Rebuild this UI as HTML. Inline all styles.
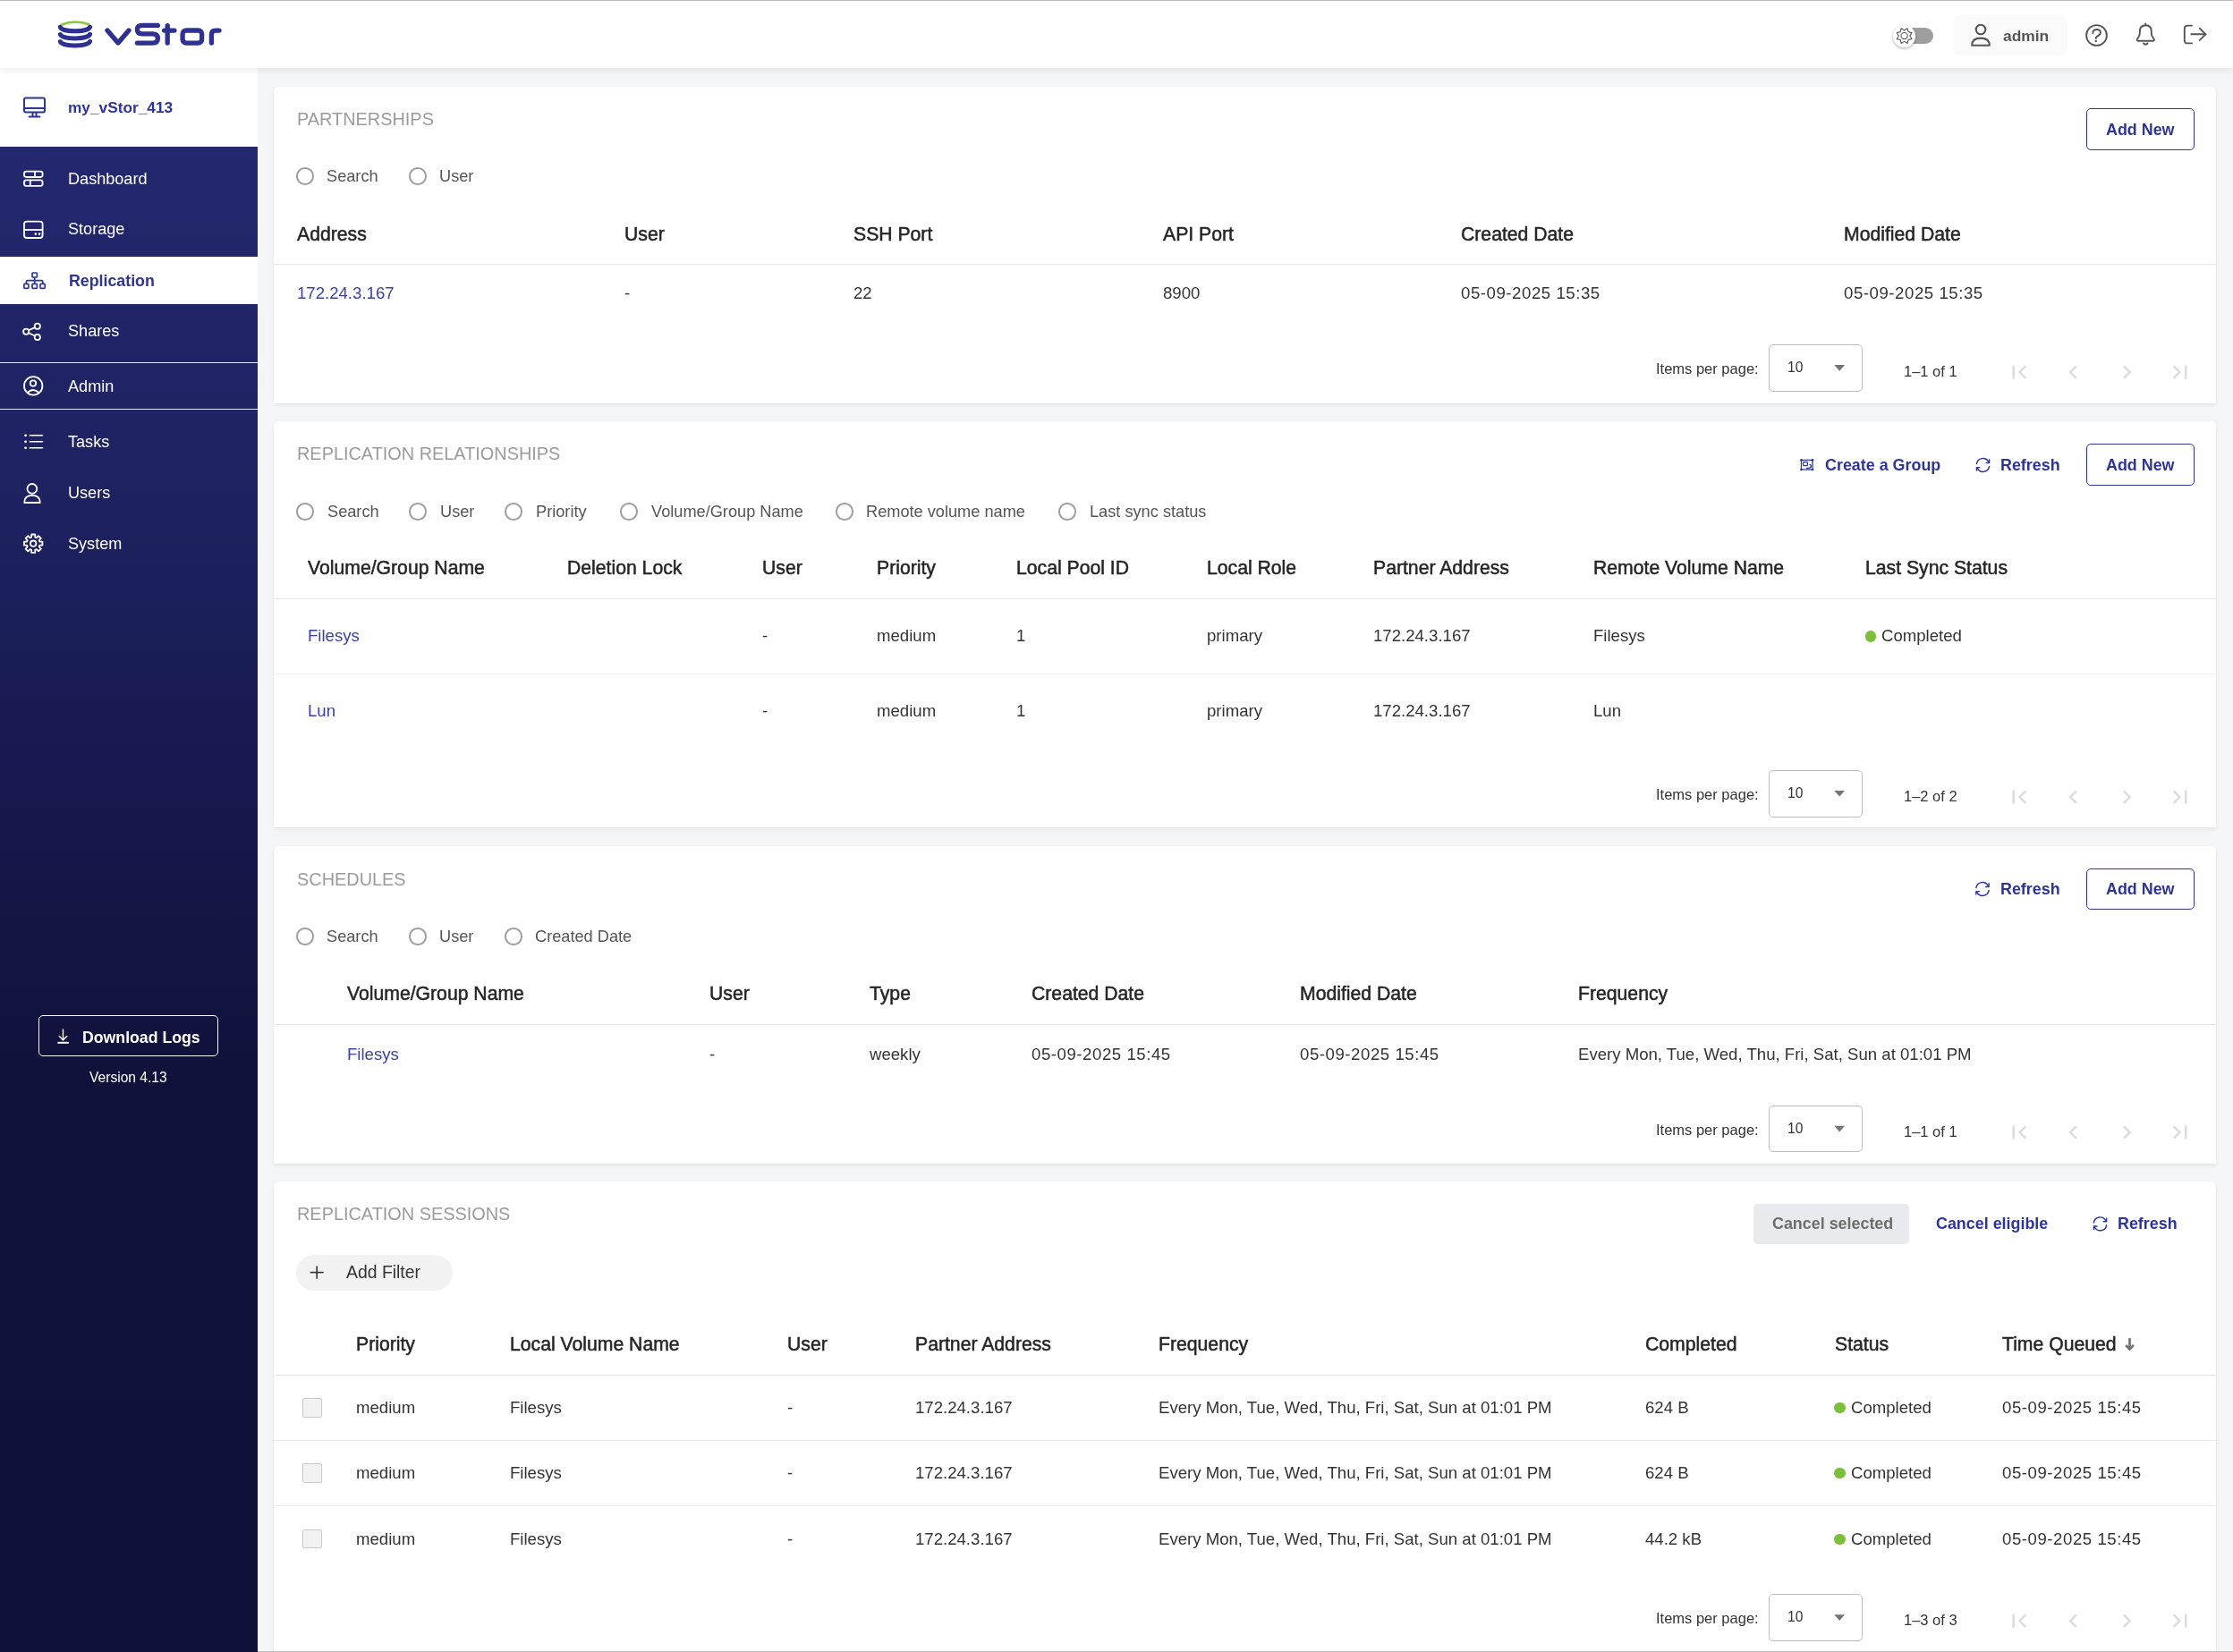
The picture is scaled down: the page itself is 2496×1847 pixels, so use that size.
<!DOCTYPE html>
<html><head><meta charset="utf-8"><title>vStor - Replication</title>
<style>
html,body{margin:0;padding:0;}
body{width:2496px;height:1847px;overflow:hidden;position:relative;background:#f4f5f7;font-family:"Liberation Sans",sans-serif;}
.t{position:absolute;white-space:nowrap;will-change:transform;font-family:"Liberation Sans",sans-serif;}
svg{overflow:visible}
</style></head><body>
<div style="position:absolute;left:288.0px;top:76.0px;width:2208.0px;height:1771.0px;background:#f4f5f7"></div>
<div style="position:absolute;left:0.0px;top:76.0px;width:288.0px;height:88.0px;background:#ffffff"></div>
<div style="position:absolute;left:0.0px;top:164.0px;width:288.0px;height:1683.0px;background:linear-gradient(180deg,#23286f 0%,#1d215f 25%,#15184b 45%,#10123b 62%,#0f1138 100%)"></div>
<svg style="position:absolute;left:20px;top:100px;" width="40" height="40" viewBox="20 100 40 40" fill="none"><g stroke="#2d3596" stroke-width="2" stroke-linecap="round" stroke-linejoin="round"><rect x="27" y="109.5" width="23" height="16" rx="2"/><line x1="27" y1="121" x2="50" y2="121"/><line x1="36.5" y1="126" x2="36.5" y2="130"/><line x1="40.5" y1="126" x2="40.5" y2="130"/><line x1="32.5" y1="130.5" x2="44.5" y2="130.5"/></g></svg>
<div class="t" style="left:76.0px;top:111.6px;font-size:17.3px;line-height:17.3px;color:#2d3596;font-weight:700;">my_vStor_413</div>
<svg style="position:absolute;left:0px;top:160px;" width="288" height="480" viewBox="0 160 288 480" fill="none"><g stroke="#ffffff" stroke-width="1.8"><rect x="27" y="191.6" width="20.6" height="6.4" rx="2.4"/><line x1="39" y1="191.6" x2="39" y2="198"/><rect x="27" y="201.4" width="20.6" height="6.4" rx="2.4"/><line x1="33.8" y1="201.4" x2="33.8" y2="207.8"/></g><g stroke="#ffffff" stroke-width="1.8"><rect x="27" y="247.6" width="20.6" height="18.4" rx="3"/><line x1="27" y1="257" x2="47.6" y2="257"/></g><circle cx="39.8" cy="261.6" r="1.3" fill="#ffffff"/><circle cx="44.1" cy="261.6" r="1.3" fill="#ffffff"/></svg>
<div class="t" style="left:75.7px;top:190.5px;font-size:18.1px;line-height:18.1px;color:#ffffff;font-weight:400;">Dashboard</div>
<div class="t" style="left:75.7px;top:247.3px;font-size:18.1px;line-height:18.1px;color:#ffffff;font-weight:400;">Storage</div>
<div style="position:absolute;left:0.0px;top:287.0px;width:288.0px;height:53.0px;background:#ffffff"></div>
<svg style="position:absolute;left:0px;top:160px;" width="288" height="480" viewBox="0 160 288 480" fill="none"><g stroke="#2d3596" stroke-width="1.7" stroke-linejoin="round"><rect x="36" y="305" width="5.4" height="5" rx="0.8"/><line x1="38.7" y1="310" x2="38.7" y2="317"/><path d="M29.4 317 V315 Q29.4 313.6 30.8 313.6 H46.4 Q47.8 313.6 47.8 315 V317"/><rect x="26.9" y="317.3" width="5" height="5" rx="0.8"/><rect x="36" y="317.3" width="5.4" height="5" rx="0.8"/><rect x="45" y="317.3" width="5.2" height="5" rx="0.8"/></g></svg>
<div class="t" style="left:76.5px;top:305.5px;font-size:17.8px;line-height:17.8px;color:#2d3596;font-weight:700;">Replication</div>
<svg style="position:absolute;left:0px;top:160px;" width="288" height="480" viewBox="0 160 288 480" fill="none"><g stroke="#ffffff" stroke-width="1.8"><circle cx="41.8" cy="364.7" r="3.1"/><circle cx="29.2" cy="370.8" r="3.1"/><circle cx="41.8" cy="377" r="3.1"/><line x1="32" y1="369.3" x2="39" y2="366.1"/><line x1="32" y1="372.3" x2="39" y2="375.5"/></g></svg>
<div class="t" style="left:75.7px;top:360.9px;font-size:18.1px;line-height:18.1px;color:#ffffff;font-weight:400;">Shares</div>
<div style="position:absolute;left:0.0px;top:404.8px;width:288.0px;height:1.2px;background:#e9eaf2"></div>
<svg style="position:absolute;left:0px;top:160px;" width="288" height="480" viewBox="0 160 288 480" fill="none"><g stroke="#ffffff" stroke-width="1.8"><circle cx="37.2" cy="431.4" r="10.2"/><circle cx="37" cy="428.6" r="3.2"/><path d="M30.4 439.4 Q37 432.6 43.8 439.4"/></g></svg>
<div class="t" style="left:75.7px;top:422.9px;font-size:18.1px;line-height:18.1px;color:#ffffff;font-weight:400;">Admin</div>
<div style="position:absolute;left:0.0px;top:456.8px;width:288.0px;height:1.2px;background:#e9eaf2"></div>
<svg style="position:absolute;left:0px;top:160px;" width="288" height="480" viewBox="0 160 288 480" fill="none"><g fill="#ffffff"><circle cx="28.6" cy="486.8" r="1.4"/><circle cx="28.6" cy="493.8" r="1.4"/><circle cx="28.6" cy="500.8" r="1.4"/></g><g stroke="#ffffff" stroke-width="1.6" stroke-linecap="round"><line x1="33.4" y1="486.8" x2="47.4" y2="486.8"/><line x1="33.4" y1="493.8" x2="47.4" y2="493.8"/><line x1="33.4" y1="500.8" x2="47.4" y2="500.8"/></g></svg>
<div class="t" style="left:75.7px;top:484.9px;font-size:18.1px;line-height:18.1px;color:#ffffff;font-weight:400;">Tasks</div>
<svg style="position:absolute;left:0px;top:160px;" width="288" height="480" viewBox="0 160 288 480" fill="none"><g stroke="#ffffff" stroke-width="1.8"><circle cx="35.9" cy="546.4" r="5.4"/><path d="M27.2 562 Q27.2 553.8 36 553.8 Q44.8 553.8 44.8 562 Z" stroke-linejoin="round"/></g></svg>
<div class="t" style="left:75.7px;top:541.5px;font-size:18.1px;line-height:18.1px;color:#ffffff;font-weight:400;">Users</div>
<svg style="position:absolute;left:0px;top:160px;" width="288" height="480" viewBox="0 160 288 480" fill="none"><g stroke="#ffffff" stroke-width="1.8" stroke-linejoin="round"><path d="M35.22 597.49 L39.18 597.49 L39.18 600.57 L40.84 601.26 L43.02 599.08 L45.82 601.88 L43.64 604.06 L44.33 605.72 L47.41 605.72 L47.41 609.68 L44.33 609.68 L43.64 611.34 L45.82 613.52 L43.02 616.32 L40.84 614.14 L39.18 614.83 L39.18 617.91 L35.22 617.91 L35.22 614.83 L33.56 614.14 L31.38 616.32 L28.58 613.52 L30.76 611.34 L30.07 609.68 L26.99 609.68 L26.99 605.72 L30.07 605.72 L30.76 604.06 L28.58 601.88 L31.38 599.08 L33.56 601.26 L35.22 600.57 Z"/><circle cx="37.2" cy="607.7" r="3.2"/></g></svg>
<div class="t" style="left:75.7px;top:599.1px;font-size:18.1px;line-height:18.1px;color:#ffffff;font-weight:400;">System</div>
<div style="position:absolute;left:43.4px;top:1135.3px;width:201.1px;height:46.1px;border:1.6px solid #ffffff;border-radius:5px;box-sizing:border-box"></div>
<svg style="position:absolute;left:55px;top:1145px;" width="30" height="30" viewBox="55 1145 30 30" fill="none"><g stroke="#ffffff" stroke-width="1.7" stroke-linecap="round" stroke-linejoin="round"><line x1="70.5" y1="1151" x2="70.5" y2="1162.8" stroke-width="1.4"/><path d="M66.3 1158.6 L70.5 1162.8 L74.7 1158.6" stroke-width="1.4"/><line x1="64.4" y1="1165.8" x2="76.8" y2="1165.8" stroke-width="2" stroke-linecap="butt"/></g></svg>
<div class="t" style="left:92.2px;top:1151.5px;font-size:17.7px;line-height:17.7px;color:#ffffff;font-weight:700;">Download Logs</div>
<div class="t" style="left:100.3px;top:1197.2px;font-size:15.6px;line-height:15.6px;color:#ffffff;font-weight:400;">Version 4.13</div>
<div style="position:absolute;left:0.0px;top:0.0px;width:2496.0px;height:76.0px;background:#ffffff;box-shadow:0 3px 8px rgba(0,0,0,0.07);z-index:5"></div>
<div style="position:absolute;left:0.0px;top:0.0px;width:2496.0px;height:1.2px;background:#bdbdbd;z-index:6"></div>
<svg style="position:absolute;left:60px;top:18px;z-index:8" width="200" height="42" viewBox="60 18 200 42" fill="none"><path d="M68.8 27.7 Q83.9 21.6 99.2 27.3" stroke="#8cc63f" stroke-width="2.6" stroke-linecap="round"/><g stroke="#2e3192" stroke-width="5" stroke-linecap="round" fill="none"><path d="M67.4 30.4 C70 36.3 98 36.3 100.5 30.2"/><path d="M67.4 38.5 C70 44.4 98 44.4 100.5 38.3"/><path d="M67.4 46.6 C70 52.5 98 52.5 100.5 46.4"/></g><g stroke="#2e3192" stroke-width="5.3" stroke-linecap="round" stroke-linejoin="round" fill="none"><path d="M120 34 L132 48 L144 34"/><path d="M176.3 28.4 H159 Q153.4 28.4 153.4 33 Q153.4 37.9 159 37.9 H170.6 Q176.4 37.9 176.4 43 Q176.4 48.1 170.6 48.1 H153.4"/><path d="M187.2 28.6 V48"/><path d="M183.6 34.1 H194.9"/><rect x="204.1" y="34" width="21.5" height="14.1" rx="4"/><path d="M236.4 48 V38.5 Q236.4 34.1 240.8 34.1 H245"/></g></svg>
<div style="position:absolute;left:2129.0px;top:31.0px;width:32.0px;height:18.0px;background:#9e9e9e;border-radius:9px;z-index:7"></div>
<div style="position:absolute;left:2116.3px;top:28.2px;width:24.6px;height:24.6px;background:#ffffff;border-radius:50%;box-shadow:0 1px 3px rgba(0,0,0,0.35);z-index:8"></div>
<svg style="position:absolute;left:2110px;top:22px;z-index:9" width="40" height="40" viewBox="2110 22 40 40" fill="none"><g stroke="#555" stroke-width="1.1" stroke-linejoin="miter"><path d="M2132.04 31.79 L2133.05 35.65 L2136.91 36.66 L2134.90 40.10 L2136.91 43.54 L2133.05 44.55 L2132.04 48.41 L2128.60 46.40 L2125.16 48.41 L2124.15 44.55 L2120.29 43.54 L2122.30 40.10 L2120.29 36.66 L2124.15 35.65 L2125.16 31.79 L2128.60 33.80 Z"/><circle cx="2128.6" cy="40.1" r="3.6"/></g></svg>
<div style="position:absolute;left:2183.0px;top:17.2px;width:128.0px;height:44.5px;background:#fafafa;border-radius:8px;z-index:7"></div>
<svg style="position:absolute;left:2195px;top:20px;z-index:8" width="40" height="40" viewBox="2195 20 40 40" fill="none"><g stroke="#555" stroke-width="2.1" stroke-linejoin="round"><circle cx="2214" cy="33" r="5.3"/><path d="M2204.2 50.7 Q2204.2 42.6 2214 42.6 Q2223.8 42.6 2223.8 50.7 Z"/></g></svg>
<div class="t" style="left:2239.0px;top:31.5px;font-size:17.4px;line-height:17.4px;color:#555555;font-weight:700;z-index:8">admin</div>
<svg style="position:absolute;left:2325px;top:20px;z-index:8" width="40" height="40" viewBox="2325 20 40 40" fill="none"><g stroke="#555" stroke-width="1.9" stroke-linecap="round" fill="none"><circle cx="2343.5" cy="39.5" r="11.4"/><path d="M2339.3 37 Q2339.3 33 2343.6 33 Q2347.9 33 2347.9 36.4 Q2347.9 38.6 2344.6 40.3 Q2342.8 41.3 2342.8 43"/></g><circle cx="2342.8" cy="45.9" r="1.2" fill="#555"/></svg>
<svg style="position:absolute;left:2380px;top:20px;z-index:8" width="40" height="40" viewBox="2380 20 40 40" fill="none"><g stroke="#555" stroke-width="1.9" stroke-linecap="round" stroke-linejoin="round" fill="none"><path d="M2398.3 26.5 V28.3"/><path d="M2398.3 28.3 Q2391.8 28.3 2391.8 35.5 V37.5 Q2391.8 40 2389.5 42.8 Q2387.9 44.7 2389.6 45.7 H2407 Q2408.7 44.7 2407.1 42.8 Q2404.8 40 2404.8 37.5 V35.5 Q2404.8 28.3 2398.3 28.3 Z"/><path d="M2396 48.5 Q2398.3 50.8 2400.6 48.5"/></g></svg>
<svg style="position:absolute;left:2435px;top:20px;z-index:8" width="40" height="40" viewBox="2435 20 40 40" fill="none"><g stroke="#555" stroke-width="1.9" stroke-linecap="round" stroke-linejoin="round" fill="none"><path d="M2450 28.6 H2445.3 Q2441.8 28.6 2441.8 32.1 V44.9 Q2441.8 48.4 2445.3 48.4 H2450"/><path d="M2449.3 38.3 H2465.4"/><path d="M2458.8 31.7 L2465.4 38.3 L2458.8 44.9"/></g></svg>
<div style="position:absolute;left:306.0px;top:96.5px;width:2171.0px;height:354.5px;background:#ffffff;border-radius:5px 5px 0 0;box-shadow:0 2px 4px rgba(0,0,0,0.07),0 0 1px rgba(0,0,0,0.06)"></div>
<div class="t" style="left:332.0px;top:123.8px;font-size:19.9px;line-height:19.9px;color:#9b9b9b;font-weight:400;">PARTNERSHIPS</div>
<div style="position:absolute;left:2332.3px;top:121.3px;width:120.4px;height:46.4px;border:1.6px solid #2d3596;border-radius:5px;box-sizing:border-box"></div>
<div class="t" style="left:2353.5px;top:136.8px;font-size:17.9px;line-height:17.9px;color:#2d3596;font-weight:700;">Add New</div>
<div style="position:absolute;left:331.4px;top:187.2px;width:19.6px;height:19.6px;border:2px solid #9e9e9e;border-radius:50%;box-sizing:border-box"></div>
<div class="t" style="left:365.0px;top:188.0px;font-size:18.2px;line-height:18.2px;color:#555555;font-weight:400;">Search</div>
<div style="position:absolute;left:457.2px;top:187.2px;width:19.6px;height:19.6px;border:2px solid #9e9e9e;border-radius:50%;box-sizing:border-box"></div>
<div class="t" style="left:491.0px;top:188.0px;font-size:18.2px;line-height:18.2px;color:#555555;font-weight:400;">User</div>
<div class="t" style="left:332.0px;top:250.5px;font-size:21.2px;line-height:21.2px;color:#252525;font-weight:400;-webkit-text-stroke:0.5px #252525">Address</div>
<div class="t" style="left:698.0px;top:250.5px;font-size:21.2px;line-height:21.2px;color:#252525;font-weight:400;-webkit-text-stroke:0.5px #252525">User</div>
<div class="t" style="left:953.6px;top:250.5px;font-size:21.2px;line-height:21.2px;color:#252525;font-weight:400;-webkit-text-stroke:0.5px #252525">SSH Port</div>
<div class="t" style="left:1300.0px;top:250.5px;font-size:21.2px;line-height:21.2px;color:#252525;font-weight:400;-webkit-text-stroke:0.5px #252525">API Port</div>
<div class="t" style="left:1632.7px;top:250.5px;font-size:21.2px;line-height:21.2px;color:#252525;font-weight:400;-webkit-text-stroke:0.5px #252525">Created Date</div>
<div class="t" style="left:2061.0px;top:250.5px;font-size:21.2px;line-height:21.2px;color:#252525;font-weight:400;-webkit-text-stroke:0.5px #252525">Modified Date</div>
<div style="position:absolute;left:306.0px;top:294.5px;width:2171.0px;height:1.2px;background:#e8e8e8"></div>
<div class="t" style="left:332.0px;top:319.1px;font-size:18.6px;line-height:18.6px;color:#3a42a6;font-weight:400;">172.24.3.167</div>
<div class="t" style="left:698.0px;top:319.1px;font-size:18.6px;line-height:18.6px;color:#333333;font-weight:400;">-</div>
<div class="t" style="left:953.6px;top:319.1px;font-size:18.6px;line-height:18.6px;color:#333333;font-weight:400;">22</div>
<div class="t" style="left:1300.0px;top:319.1px;font-size:18.6px;line-height:18.6px;color:#333333;font-weight:400;">8900</div>
<div class="t" style="left:1632.7px;top:319.1px;font-size:18.6px;line-height:18.6px;color:#333333;font-weight:400;letter-spacing:0.56px;">05-09-2025 15:35</div>
<div class="t" style="left:2061.0px;top:319.1px;font-size:18.6px;line-height:18.6px;color:#333333;font-weight:400;letter-spacing:0.56px;">05-09-2025 15:35</div>
<div class="t" style="left:1850.7px;top:404.1px;font-size:16.5px;line-height:16.5px;color:#333333;font-weight:400;">Items per page:</div>
<div style="position:absolute;left:1977.3px;top:385.1px;width:104.5px;height:52.6px;border:1.3px solid #bdbdbd;border-radius:5px;box-sizing:border-box;background:#fff"></div>
<div class="t" style="left:1998.0px;top:402.8px;font-size:15.6px;line-height:15.6px;color:#333333;font-weight:400;">10</div>
<svg style="position:absolute;left:2045px;top:403px;" width="22" height="14" viewBox="2045 403 22 14" fill="none"><path d="M2050.3 408.0 L2062 408.0 L2056.15 414.7 Z" fill="#757575"/></svg>
<div class="t" style="left:2127.5px;top:406.8px;font-size:16.5px;line-height:16.5px;color:#333333;font-weight:400;">1–1 of 1</div>
<svg style="position:absolute;left:2239px;top:398px;" width="36" height="36" viewBox="2239 398 36 36" fill="none"><g transform="translate(2241.76 400.86) scale(1.27)"><path d="M18.41 16.59L13.82 12l4.59-4.59L17 6l-6 6 6 6zM6 6h2v12H6z" fill="#dcdcdc"/></g></svg>
<svg style="position:absolute;left:2300px;top:398px;" width="36" height="36" viewBox="2300 398 36 36" fill="none"><g transform="translate(2302.16 400.86) scale(1.27)"><path d="M15.41 7.41L14 6l-6 6 6 6 1.41-1.41L10.83 12z" fill="#dcdcdc"/></g></svg>
<svg style="position:absolute;left:2360px;top:398px;" width="36" height="36" viewBox="2360 398 36 36" fill="none"><g transform="translate(2362.06 400.86) scale(1.27)"><path d="M10 6L8.59 7.41 13.17 12l-4.58 4.59L10 18l6-6z" fill="#dcdcdc"/></g></svg>
<svg style="position:absolute;left:2419px;top:398px;" width="36" height="36" viewBox="2419 398 36 36" fill="none"><g transform="translate(2421.66 400.86) scale(1.27)"><path d="M5.59 7.41L10.18 12l-4.59 4.59L7 18l6-6-6-6zM16 6h2v12h-2z" fill="#dcdcdc"/></g></svg>
<div style="position:absolute;left:306.0px;top:471.2px;width:2171.0px;height:454.3px;background:#ffffff;border-radius:5px 5px 0 0;box-shadow:0 2px 4px rgba(0,0,0,0.07),0 0 1px rgba(0,0,0,0.06)"></div>
<div class="t" style="left:332.0px;top:498.0px;font-size:19.9px;line-height:19.9px;color:#9b9b9b;font-weight:400;">REPLICATION RELATIONSHIPS</div>
<div style="position:absolute;left:2332.3px;top:496.3px;width:120.4px;height:46.4px;border:1.6px solid #2d3596;border-radius:5px;box-sizing:border-box"></div>
<div class="t" style="left:2353.5px;top:511.8px;font-size:17.9px;line-height:17.9px;color:#2d3596;font-weight:700;">Add New</div>
<svg style="position:absolute;left:2205px;top:507px;" width="24" height="24" viewBox="2205 507 24 24" fill="none"><g stroke="#2d3596" stroke-width="1.45" stroke-linecap="round" stroke-linejoin="round" fill="none"><path d="M2209.40 518.60 A7.1 7.1 0 0 1 2222.80 516.50"/><path d="M2223.60 513.70 V517.40 H2220.20"/><path d="M2223.60 521.40 A7.1 7.1 0 0 1 2210.20 523.40"/><path d="M2209.40 526.10 V522.60 H2212.90"/></g></svg>
<div class="t" style="left:2236.4px;top:511.7px;font-size:17.9px;line-height:17.9px;color:#2d3596;font-weight:700;">Refresh</div>
<svg style="position:absolute;left:2008px;top:508px;" width="24" height="24" viewBox="2008 508 24 24" fill="none"><g stroke="#2d3596" stroke-width="1.25" fill="none" stroke-linecap="round"><rect x="2013.45" y="514.4" width="12.55" height="10.6"/><rect x="2015.6" y="516.5" width="4.8" height="4" rx="0.8"/><path d="M2023 519.5 Q2024.8 519.8 2024.3 521.8 Q2023.8 523.3 2021.8 523.3 H2019.5"/></g><g fill="#2d3596"><circle cx="2013.45" cy="514.4" r="1.3"/><circle cx="2026" cy="514.4" r="1.3"/><circle cx="2013.45" cy="525" r="1.3"/><circle cx="2026" cy="525" r="1.3"/></g></svg>
<div class="t" style="left:2039.5px;top:511.7px;font-size:17.9px;line-height:17.9px;color:#2d3596;font-weight:700;">Create a Group</div>
<div style="position:absolute;left:331.1px;top:562.4px;width:19.6px;height:19.6px;border:2px solid #9e9e9e;border-radius:50%;box-sizing:border-box"></div>
<div class="t" style="left:366.0px;top:563.2px;font-size:18.2px;line-height:18.2px;color:#555555;font-weight:400;">Search</div>
<div style="position:absolute;left:457.1px;top:562.4px;width:19.6px;height:19.6px;border:2px solid #9e9e9e;border-radius:50%;box-sizing:border-box"></div>
<div class="t" style="left:491.5px;top:563.2px;font-size:18.2px;line-height:18.2px;color:#555555;font-weight:400;">User</div>
<div style="position:absolute;left:564.1px;top:562.4px;width:19.6px;height:19.6px;border:2px solid #9e9e9e;border-radius:50%;box-sizing:border-box"></div>
<div class="t" style="left:599.0px;top:563.2px;font-size:18.2px;line-height:18.2px;color:#555555;font-weight:400;">Priority</div>
<div style="position:absolute;left:693.1px;top:562.4px;width:19.6px;height:19.6px;border:2px solid #9e9e9e;border-radius:50%;box-sizing:border-box"></div>
<div class="t" style="left:727.6px;top:563.2px;font-size:18.2px;line-height:18.2px;color:#555555;font-weight:400;">Volume/Group Name</div>
<div style="position:absolute;left:934.1px;top:562.4px;width:19.6px;height:19.6px;border:2px solid #9e9e9e;border-radius:50%;box-sizing:border-box"></div>
<div class="t" style="left:968.0px;top:563.2px;font-size:18.2px;line-height:18.2px;color:#555555;font-weight:400;">Remote volume name</div>
<div style="position:absolute;left:1183.1px;top:562.4px;width:19.6px;height:19.6px;border:2px solid #9e9e9e;border-radius:50%;box-sizing:border-box"></div>
<div class="t" style="left:1217.7px;top:563.2px;font-size:18.2px;line-height:18.2px;color:#555555;font-weight:400;">Last sync status</div>
<div class="t" style="left:344.0px;top:624.0px;font-size:21.2px;line-height:21.2px;color:#252525;font-weight:400;-webkit-text-stroke:0.5px #252525">Volume/Group Name</div>
<div class="t" style="left:634.0px;top:624.0px;font-size:21.2px;line-height:21.2px;color:#252525;font-weight:400;-webkit-text-stroke:0.5px #252525">Deletion Lock</div>
<div class="t" style="left:852.0px;top:624.0px;font-size:21.2px;line-height:21.2px;color:#252525;font-weight:400;-webkit-text-stroke:0.5px #252525">User</div>
<div class="t" style="left:980.0px;top:624.0px;font-size:21.2px;line-height:21.2px;color:#252525;font-weight:400;-webkit-text-stroke:0.5px #252525">Priority</div>
<div class="t" style="left:1136.0px;top:624.0px;font-size:21.2px;line-height:21.2px;color:#252525;font-weight:400;-webkit-text-stroke:0.5px #252525">Local Pool ID</div>
<div class="t" style="left:1349.0px;top:624.0px;font-size:21.2px;line-height:21.2px;color:#252525;font-weight:400;-webkit-text-stroke:0.5px #252525">Local Role</div>
<div class="t" style="left:1534.5px;top:624.0px;font-size:21.2px;line-height:21.2px;color:#252525;font-weight:400;-webkit-text-stroke:0.5px #252525">Partner Address</div>
<div class="t" style="left:1780.6px;top:624.0px;font-size:21.2px;line-height:21.2px;color:#252525;font-weight:400;-webkit-text-stroke:0.5px #252525">Remote Volume Name</div>
<div class="t" style="left:2085.3px;top:624.0px;font-size:21.2px;line-height:21.2px;color:#252525;font-weight:400;-webkit-text-stroke:0.5px #252525">Last Sync Status</div>
<div style="position:absolute;left:306.0px;top:669.0px;width:2171.0px;height:1.2px;background:#e8e8e8"></div>
<div class="t" style="left:344.0px;top:702.1px;font-size:18.6px;line-height:18.6px;color:#3a42a6;font-weight:400;">Filesys</div>
<div class="t" style="left:852.0px;top:702.1px;font-size:18.6px;line-height:18.6px;color:#333333;font-weight:400;">-</div>
<div class="t" style="left:980.0px;top:702.1px;font-size:18.6px;line-height:18.6px;color:#333333;font-weight:400;">medium</div>
<div class="t" style="left:1136.0px;top:702.1px;font-size:18.6px;line-height:18.6px;color:#333333;font-weight:400;">1</div>
<div class="t" style="left:1349.0px;top:702.1px;font-size:18.6px;line-height:18.6px;color:#333333;font-weight:400;">primary</div>
<div class="t" style="left:1534.5px;top:702.1px;font-size:18.6px;line-height:18.6px;color:#333333;font-weight:400;">172.24.3.167</div>
<div class="t" style="left:1780.6px;top:702.1px;font-size:18.6px;line-height:18.6px;color:#333333;font-weight:400;">Filesys</div>
<div class="t" style="left:344.0px;top:786.3px;font-size:18.6px;line-height:18.6px;color:#3a42a6;font-weight:400;">Lun</div>
<div class="t" style="left:852.0px;top:786.3px;font-size:18.6px;line-height:18.6px;color:#333333;font-weight:400;">-</div>
<div class="t" style="left:980.0px;top:786.3px;font-size:18.6px;line-height:18.6px;color:#333333;font-weight:400;">medium</div>
<div class="t" style="left:1136.0px;top:786.3px;font-size:18.6px;line-height:18.6px;color:#333333;font-weight:400;">1</div>
<div class="t" style="left:1349.0px;top:786.3px;font-size:18.6px;line-height:18.6px;color:#333333;font-weight:400;">primary</div>
<div class="t" style="left:1534.5px;top:786.3px;font-size:18.6px;line-height:18.6px;color:#333333;font-weight:400;">172.24.3.167</div>
<div class="t" style="left:1780.6px;top:786.3px;font-size:18.6px;line-height:18.6px;color:#333333;font-weight:400;">Lun</div>
<div style="position:absolute;left:2084.5px;top:705.2px;width:12.4px;height:12.4px;background:#7cbf3a;border-radius:50%"></div>
<div class="t" style="left:2103.0px;top:702.1px;font-size:18.6px;line-height:18.6px;color:#333333;font-weight:400;">Completed</div>
<div style="position:absolute;left:306.0px;top:753.0px;width:2171.0px;height:1.2px;background:#efefef"></div>
<div class="t" style="left:1850.7px;top:880.0px;font-size:16.5px;line-height:16.5px;color:#333333;font-weight:400;">Items per page:</div>
<div style="position:absolute;left:1977.3px;top:861.0px;width:104.5px;height:52.6px;border:1.3px solid #bdbdbd;border-radius:5px;box-sizing:border-box;background:#fff"></div>
<div class="t" style="left:1998.0px;top:878.7px;font-size:15.6px;line-height:15.6px;color:#333333;font-weight:400;">10</div>
<svg style="position:absolute;left:2045px;top:879px;" width="22" height="14" viewBox="2045 879 22 14" fill="none"><path d="M2050.3 883.9 L2062 883.9 L2056.15 890.6 Z" fill="#757575"/></svg>
<div class="t" style="left:2127.5px;top:881.9px;font-size:16.5px;line-height:16.5px;color:#333333;font-weight:400;">1–2 of 2</div>
<svg style="position:absolute;left:2239px;top:873px;" width="36" height="36" viewBox="2239 873 36 36" fill="none"><g transform="translate(2241.76 875.96) scale(1.27)"><path d="M18.41 16.59L13.82 12l4.59-4.59L17 6l-6 6 6 6zM6 6h2v12H6z" fill="#dcdcdc"/></g></svg>
<svg style="position:absolute;left:2300px;top:873px;" width="36" height="36" viewBox="2300 873 36 36" fill="none"><g transform="translate(2302.16 875.96) scale(1.27)"><path d="M15.41 7.41L14 6l-6 6 6 6 1.41-1.41L10.83 12z" fill="#dcdcdc"/></g></svg>
<svg style="position:absolute;left:2360px;top:873px;" width="36" height="36" viewBox="2360 873 36 36" fill="none"><g transform="translate(2362.06 875.96) scale(1.27)"><path d="M10 6L8.59 7.41 13.17 12l-4.58 4.59L10 18l6-6z" fill="#dcdcdc"/></g></svg>
<svg style="position:absolute;left:2419px;top:873px;" width="36" height="36" viewBox="2419 873 36 36" fill="none"><g transform="translate(2421.66 875.96) scale(1.27)"><path d="M5.59 7.41L10.18 12l-4.59 4.59L7 18l6-6-6-6zM16 6h2v12h-2z" fill="#dcdcdc"/></g></svg>
<div style="position:absolute;left:306.0px;top:946.0px;width:2171.0px;height:355.0px;background:#ffffff;border-radius:5px 5px 0 0;box-shadow:0 2px 4px rgba(0,0,0,0.07),0 0 1px rgba(0,0,0,0.06)"></div>
<div class="t" style="left:332.0px;top:973.6px;font-size:19.9px;line-height:19.9px;color:#9b9b9b;font-weight:400;">SCHEDULES</div>
<div style="position:absolute;left:2332.3px;top:970.8px;width:120.4px;height:46.4px;border:1.6px solid #2d3596;border-radius:5px;box-sizing:border-box"></div>
<div class="t" style="left:2353.5px;top:986.3px;font-size:17.9px;line-height:17.9px;color:#2d3596;font-weight:700;">Add New</div>
<svg style="position:absolute;left:2204px;top:981px;" width="24" height="24" viewBox="2204 981 24 24" fill="none"><g stroke="#2d3596" stroke-width="1.45" stroke-linecap="round" stroke-linejoin="round" fill="none"><path d="M2208.90 992.60 A7.1 7.1 0 0 1 2222.30 990.50"/><path d="M2223.10 987.70 V991.40 H2219.70"/><path d="M2223.10 995.40 A7.1 7.1 0 0 1 2209.70 997.40"/><path d="M2208.90 1000.10 V996.60 H2212.40"/></g></svg>
<div class="t" style="left:2235.5px;top:985.7px;font-size:17.9px;line-height:17.9px;color:#2d3596;font-weight:700;">Refresh</div>
<div style="position:absolute;left:331.1px;top:1037.2px;width:19.6px;height:19.6px;border:2px solid #9e9e9e;border-radius:50%;box-sizing:border-box"></div>
<div class="t" style="left:365.4px;top:1038.0px;font-size:18.2px;line-height:18.2px;color:#555555;font-weight:400;">Search</div>
<div style="position:absolute;left:457.4px;top:1037.2px;width:19.6px;height:19.6px;border:2px solid #9e9e9e;border-radius:50%;box-sizing:border-box"></div>
<div class="t" style="left:491.4px;top:1038.0px;font-size:18.2px;line-height:18.2px;color:#555555;font-weight:400;">User</div>
<div style="position:absolute;left:564.3px;top:1037.2px;width:19.6px;height:19.6px;border:2px solid #9e9e9e;border-radius:50%;box-sizing:border-box"></div>
<div class="t" style="left:598.3px;top:1038.0px;font-size:18.2px;line-height:18.2px;color:#555555;font-weight:400;">Created Date</div>
<div class="t" style="left:388.0px;top:1100.2px;font-size:21.2px;line-height:21.2px;color:#252525;font-weight:400;-webkit-text-stroke:0.5px #252525">Volume/Group Name</div>
<div class="t" style="left:792.6px;top:1100.2px;font-size:21.2px;line-height:21.2px;color:#252525;font-weight:400;-webkit-text-stroke:0.5px #252525">User</div>
<div class="t" style="left:972.3px;top:1100.2px;font-size:21.2px;line-height:21.2px;color:#252525;font-weight:400;-webkit-text-stroke:0.5px #252525">Type</div>
<div class="t" style="left:1153.0px;top:1100.2px;font-size:21.2px;line-height:21.2px;color:#252525;font-weight:400;-webkit-text-stroke:0.5px #252525">Created Date</div>
<div class="t" style="left:1453.3px;top:1100.2px;font-size:21.2px;line-height:21.2px;color:#252525;font-weight:400;-webkit-text-stroke:0.5px #252525">Modified Date</div>
<div class="t" style="left:1764.4px;top:1100.2px;font-size:21.2px;line-height:21.2px;color:#252525;font-weight:400;-webkit-text-stroke:0.5px #252525">Frequency</div>
<div style="position:absolute;left:306.0px;top:1145.0px;width:2171.0px;height:1.2px;background:#e8e8e8"></div>
<div class="t" style="left:388.0px;top:1169.7px;font-size:18.6px;line-height:18.6px;color:#3a42a6;font-weight:400;">Filesys</div>
<div class="t" style="left:792.6px;top:1169.7px;font-size:18.6px;line-height:18.6px;color:#333333;font-weight:400;">-</div>
<div class="t" style="left:972.3px;top:1169.7px;font-size:18.6px;line-height:18.6px;color:#333333;font-weight:400;">weekly</div>
<div class="t" style="left:1153.0px;top:1169.7px;font-size:18.6px;line-height:18.6px;color:#333333;font-weight:400;letter-spacing:0.56px;">05-09-2025 15:45</div>
<div class="t" style="left:1453.3px;top:1169.7px;font-size:18.6px;line-height:18.6px;color:#333333;font-weight:400;letter-spacing:0.56px;">05-09-2025 15:45</div>
<div class="t" style="left:1764.4px;top:1169.7px;font-size:18.6px;line-height:18.6px;color:#333333;font-weight:400;">Every Mon, Tue, Wed, Thu, Fri, Sat, Sun at 01:01 PM</div>
<div class="t" style="left:1850.7px;top:1254.8px;font-size:16.5px;line-height:16.5px;color:#333333;font-weight:400;">Items per page:</div>
<div style="position:absolute;left:1977.3px;top:1235.8px;width:104.5px;height:52.6px;border:1.3px solid #bdbdbd;border-radius:5px;box-sizing:border-box;background:#fff"></div>
<div class="t" style="left:1998.0px;top:1253.5px;font-size:15.6px;line-height:15.6px;color:#333333;font-weight:400;">10</div>
<svg style="position:absolute;left:2045px;top:1253px;" width="22" height="14" viewBox="2045 1253 22 14" fill="none"><path d="M2050.3 1258.7 L2062 1258.7 L2056.15 1265.4 Z" fill="#757575"/></svg>
<div class="t" style="left:2127.5px;top:1256.7px;font-size:16.5px;line-height:16.5px;color:#333333;font-weight:400;">1–1 of 1</div>
<svg style="position:absolute;left:2239px;top:1248px;" width="36" height="36" viewBox="2239 1248 36 36" fill="none"><g transform="translate(2241.76 1250.76) scale(1.27)"><path d="M18.41 16.59L13.82 12l4.59-4.59L17 6l-6 6 6 6zM6 6h2v12H6z" fill="#dcdcdc"/></g></svg>
<svg style="position:absolute;left:2300px;top:1248px;" width="36" height="36" viewBox="2300 1248 36 36" fill="none"><g transform="translate(2302.16 1250.76) scale(1.27)"><path d="M15.41 7.41L14 6l-6 6 6 6 1.41-1.41L10.83 12z" fill="#dcdcdc"/></g></svg>
<svg style="position:absolute;left:2360px;top:1248px;" width="36" height="36" viewBox="2360 1248 36 36" fill="none"><g transform="translate(2362.06 1250.76) scale(1.27)"><path d="M10 6L8.59 7.41 13.17 12l-4.58 4.59L10 18l6-6z" fill="#dcdcdc"/></g></svg>
<svg style="position:absolute;left:2419px;top:1248px;" width="36" height="36" viewBox="2419 1248 36 36" fill="none"><g transform="translate(2421.66 1250.76) scale(1.27)"><path d="M5.59 7.41L10.18 12l-4.59 4.59L7 18l6-6-6-6zM16 6h2v12h-2z" fill="#dcdcdc"/></g></svg>
<div style="position:absolute;left:306.0px;top:1321.0px;width:2171.0px;height:579.0px;background:#ffffff;border-radius:5px 5px 0 0;box-shadow:0 2px 4px rgba(0,0,0,0.07),0 0 1px rgba(0,0,0,0.06)"></div>
<div class="t" style="left:332.0px;top:1348.0px;font-size:19.9px;line-height:19.9px;color:#9b9b9b;font-weight:400;">REPLICATION SESSIONS</div>
<div style="position:absolute;left:1960.0px;top:1346.2px;width:173.8px;height:44.5px;background:#e8eaed;border-radius:5px"></div>
<div class="t" style="left:1980.6px;top:1360.1px;font-size:17.9px;line-height:17.9px;color:#6d6d6d;font-weight:700;">Cancel selected</div>
<div class="t" style="left:2164.2px;top:1360.1px;font-size:17.9px;line-height:17.9px;color:#2d3596;font-weight:700;">Cancel eligible</div>
<svg style="position:absolute;left:2336px;top:1356px;" width="24" height="24" viewBox="2336 1356 24 24" fill="none"><g stroke="#2d3596" stroke-width="1.45" stroke-linecap="round" stroke-linejoin="round" fill="none"><path d="M2340.40 1367.00 A7.1 7.1 0 0 1 2353.80 1364.90"/><path d="M2354.60 1362.10 V1365.80 H2351.20"/><path d="M2354.60 1369.80 A7.1 7.1 0 0 1 2341.20 1371.80"/><path d="M2340.40 1374.50 V1371.00 H2343.90"/></g></svg>
<div class="t" style="left:2367.0px;top:1360.1px;font-size:17.9px;line-height:17.9px;color:#2d3596;font-weight:700;">Refresh</div>
<div style="position:absolute;left:331.2px;top:1403.1px;width:174.7px;height:39.7px;background:#f2f2f2;border-radius:20px"></div>
<svg style="position:absolute;left:340px;top:1410px;" width="28" height="28" viewBox="340 1410 28 28" fill="none"><g stroke="#333" stroke-width="1.6"><line x1="354.2" y1="1415.5" x2="354.2" y2="1429.7"/><line x1="346.7" y1="1422.6" x2="361.6" y2="1422.6"/></g></svg>
<div class="t" style="left:386.7px;top:1412.7px;font-size:19.4px;line-height:19.4px;color:#333333;font-weight:400;">Add Filter</div>
<div class="t" style="left:398.3px;top:1491.7px;font-size:21.2px;line-height:21.2px;color:#252525;font-weight:400;-webkit-text-stroke:0.5px #252525">Priority</div>
<div class="t" style="left:570.0px;top:1491.7px;font-size:21.2px;line-height:21.2px;color:#252525;font-weight:400;-webkit-text-stroke:0.5px #252525">Local Volume Name</div>
<div class="t" style="left:880.2px;top:1491.7px;font-size:21.2px;line-height:21.2px;color:#252525;font-weight:400;-webkit-text-stroke:0.5px #252525">User</div>
<div class="t" style="left:1022.6px;top:1491.7px;font-size:21.2px;line-height:21.2px;color:#252525;font-weight:400;-webkit-text-stroke:0.5px #252525">Partner Address</div>
<div class="t" style="left:1294.5px;top:1491.7px;font-size:21.2px;line-height:21.2px;color:#252525;font-weight:400;-webkit-text-stroke:0.5px #252525">Frequency</div>
<div class="t" style="left:1839.3px;top:1491.7px;font-size:21.2px;line-height:21.2px;color:#252525;font-weight:400;-webkit-text-stroke:0.5px #252525">Completed</div>
<div class="t" style="left:2050.8px;top:1491.7px;font-size:21.2px;line-height:21.2px;color:#252525;font-weight:400;-webkit-text-stroke:0.5px #252525">Status</div>
<div class="t" style="left:2238.1px;top:1491.7px;font-size:21.2px;line-height:21.2px;color:#252525;font-weight:400;-webkit-text-stroke:0.5px #252525">Time Queued</div>
<svg style="position:absolute;left:2370px;top:1490px;" width="22" height="26" viewBox="2370 1490 22 26" fill="none"><g stroke="#727272" stroke-width="2.7" stroke-linecap="butt" stroke-linejoin="miter" fill="none"><line x1="2380.5" y1="1496.1" x2="2380.5" y2="1508"/><path d="M2376.2 1504 L2380.5 1508.6 L2384.9 1503.9"/></g></svg>
<div style="position:absolute;left:306.0px;top:1537.0px;width:2171.0px;height:1.2px;background:#e8e8e8"></div>
<div style="position:absolute;left:338.4px;top:1563.3px;width:21.3px;height:21.3px;background:#f2f2f2;border:1.6px solid #c9c9c9;border-radius:2px;box-sizing:border-box"></div>
<div class="t" style="left:398.3px;top:1565.4px;font-size:18.6px;line-height:18.6px;color:#333333;font-weight:400;">medium</div>
<div class="t" style="left:570.0px;top:1565.4px;font-size:18.6px;line-height:18.6px;color:#333333;font-weight:400;">Filesys</div>
<div class="t" style="left:880.2px;top:1565.4px;font-size:18.6px;line-height:18.6px;color:#333333;font-weight:400;">-</div>
<div class="t" style="left:1022.6px;top:1565.4px;font-size:18.6px;line-height:18.6px;color:#333333;font-weight:400;">172.24.3.167</div>
<div class="t" style="left:1294.5px;top:1565.4px;font-size:18.6px;line-height:18.6px;color:#333333;font-weight:400;">Every Mon, Tue, Wed, Thu, Fri, Sat, Sun at 01:01 PM</div>
<div class="t" style="left:1839.3px;top:1565.4px;font-size:18.6px;line-height:18.6px;color:#333333;font-weight:400;">624 B</div>
<div style="position:absolute;left:2050.3px;top:1567.8px;width:12.4px;height:12.4px;background:#7cbf3a;border-radius:50%"></div>
<div class="t" style="left:2068.7px;top:1565.4px;font-size:18.6px;line-height:18.6px;color:#333333;font-weight:400;">Completed</div>
<div class="t" style="left:2238.1px;top:1565.4px;font-size:18.6px;line-height:18.6px;color:#333333;font-weight:400;letter-spacing:0.56px;">05-09-2025 15:45</div>
<div style="position:absolute;left:306.0px;top:1609.9px;width:2171.0px;height:1.2px;background:#efefef"></div>
<div style="position:absolute;left:338.4px;top:1636.3px;width:21.3px;height:21.3px;background:#f2f2f2;border:1.6px solid #c9c9c9;border-radius:2px;box-sizing:border-box"></div>
<div class="t" style="left:398.3px;top:1638.4px;font-size:18.6px;line-height:18.6px;color:#333333;font-weight:400;">medium</div>
<div class="t" style="left:570.0px;top:1638.4px;font-size:18.6px;line-height:18.6px;color:#333333;font-weight:400;">Filesys</div>
<div class="t" style="left:880.2px;top:1638.4px;font-size:18.6px;line-height:18.6px;color:#333333;font-weight:400;">-</div>
<div class="t" style="left:1022.6px;top:1638.4px;font-size:18.6px;line-height:18.6px;color:#333333;font-weight:400;">172.24.3.167</div>
<div class="t" style="left:1294.5px;top:1638.4px;font-size:18.6px;line-height:18.6px;color:#333333;font-weight:400;">Every Mon, Tue, Wed, Thu, Fri, Sat, Sun at 01:01 PM</div>
<div class="t" style="left:1839.3px;top:1638.4px;font-size:18.6px;line-height:18.6px;color:#333333;font-weight:400;">624 B</div>
<div style="position:absolute;left:2050.3px;top:1640.8px;width:12.4px;height:12.4px;background:#7cbf3a;border-radius:50%"></div>
<div class="t" style="left:2068.7px;top:1638.4px;font-size:18.6px;line-height:18.6px;color:#333333;font-weight:400;">Completed</div>
<div class="t" style="left:2238.1px;top:1638.4px;font-size:18.6px;line-height:18.6px;color:#333333;font-weight:400;letter-spacing:0.56px;">05-09-2025 15:45</div>
<div style="position:absolute;left:306.0px;top:1682.9px;width:2171.0px;height:1.2px;background:#efefef"></div>
<div style="position:absolute;left:338.4px;top:1710.0px;width:21.3px;height:21.3px;background:#f2f2f2;border:1.6px solid #c9c9c9;border-radius:2px;box-sizing:border-box"></div>
<div class="t" style="left:398.3px;top:1712.1px;font-size:18.6px;line-height:18.6px;color:#333333;font-weight:400;">medium</div>
<div class="t" style="left:570.0px;top:1712.1px;font-size:18.6px;line-height:18.6px;color:#333333;font-weight:400;">Filesys</div>
<div class="t" style="left:880.2px;top:1712.1px;font-size:18.6px;line-height:18.6px;color:#333333;font-weight:400;">-</div>
<div class="t" style="left:1022.6px;top:1712.1px;font-size:18.6px;line-height:18.6px;color:#333333;font-weight:400;">172.24.3.167</div>
<div class="t" style="left:1294.5px;top:1712.1px;font-size:18.6px;line-height:18.6px;color:#333333;font-weight:400;">Every Mon, Tue, Wed, Thu, Fri, Sat, Sun at 01:01 PM</div>
<div class="t" style="left:1839.3px;top:1712.1px;font-size:18.6px;line-height:18.6px;color:#333333;font-weight:400;">44.2 kB</div>
<div style="position:absolute;left:2050.3px;top:1714.5px;width:12.4px;height:12.4px;background:#7cbf3a;border-radius:50%"></div>
<div class="t" style="left:2068.7px;top:1712.1px;font-size:18.6px;line-height:18.6px;color:#333333;font-weight:400;">Completed</div>
<div class="t" style="left:2238.1px;top:1712.1px;font-size:18.6px;line-height:18.6px;color:#333333;font-weight:400;letter-spacing:0.56px;">05-09-2025 15:45</div>
<div class="t" style="left:1850.7px;top:1801.4px;font-size:16.5px;line-height:16.5px;color:#333333;font-weight:400;">Items per page:</div>
<div style="position:absolute;left:1977.3px;top:1782.4px;width:104.5px;height:52.6px;border:1.3px solid #bdbdbd;border-radius:5px;box-sizing:border-box;background:#fff"></div>
<div class="t" style="left:1998.0px;top:1800.1px;font-size:15.6px;line-height:15.6px;color:#333333;font-weight:400;">10</div>
<svg style="position:absolute;left:2045px;top:1800px;" width="22" height="14" viewBox="2045 1800 22 14" fill="none"><path d="M2050.3 1805.3 L2062 1805.3 L2056.15 1812.0 Z" fill="#757575"/></svg>
<div class="t" style="left:2127.5px;top:1802.9px;font-size:16.5px;line-height:16.5px;color:#333333;font-weight:400;">1–3 of 3</div>
<svg style="position:absolute;left:2239px;top:1794px;" width="36" height="36" viewBox="2239 1794 36 36" fill="none"><g transform="translate(2241.76 1796.96) scale(1.27)"><path d="M18.41 16.59L13.82 12l4.59-4.59L17 6l-6 6 6 6zM6 6h2v12H6z" fill="#dcdcdc"/></g></svg>
<svg style="position:absolute;left:2300px;top:1794px;" width="36" height="36" viewBox="2300 1794 36 36" fill="none"><g transform="translate(2302.16 1796.96) scale(1.27)"><path d="M15.41 7.41L14 6l-6 6 6 6 1.41-1.41L10.83 12z" fill="#dcdcdc"/></g></svg>
<svg style="position:absolute;left:2360px;top:1794px;" width="36" height="36" viewBox="2360 1794 36 36" fill="none"><g transform="translate(2362.06 1796.96) scale(1.27)"><path d="M10 6L8.59 7.41 13.17 12l-4.58 4.59L10 18l6-6z" fill="#dcdcdc"/></g></svg>
<svg style="position:absolute;left:2419px;top:1794px;" width="36" height="36" viewBox="2419 1794 36 36" fill="none"><g transform="translate(2421.66 1796.96) scale(1.27)"><path d="M5.59 7.41L10.18 12l-4.59 4.59L7 18l6-6-6-6zM16 6h2v12h-2z" fill="#dcdcdc"/></g></svg>
<div style="position:absolute;left:288.0px;top:1845.6px;width:2208.0px;height:1.4px;background:#bdbdbd;z-index:6"></div>
</body></html>
